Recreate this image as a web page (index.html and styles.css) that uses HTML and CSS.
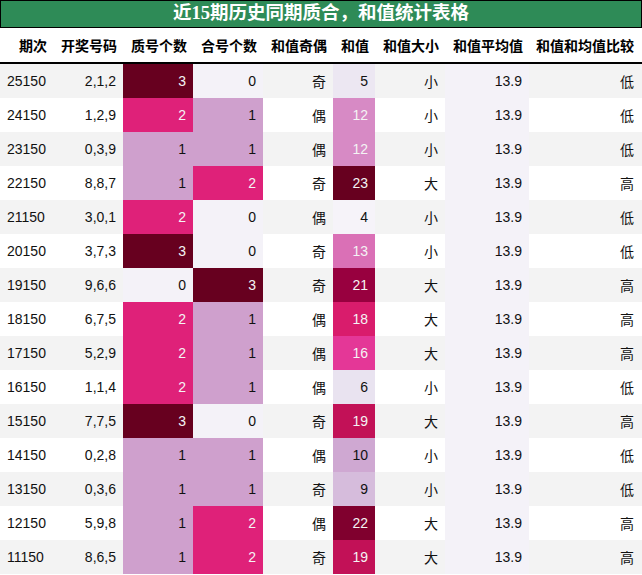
FILE: index.html
```html
<!DOCTYPE html>
<html lang="zh">
<head>
<meta charset="utf-8">
<title>近15期历史同期质合，和值统计表格</title>
<link rel="stylesheet" href="styles.css">
</head>
<body>
<div class="wrap">
  <div class="title">近15期历史同期质合，和值统计表格</div>
  <table class="grid">
    <colgroup>
      <col class="w1"><col class="w2"><col class="w3"><col class="w4"><col class="w5"><col class="w6"><col class="w7"><col class="w8"><col class="w9">
    </colgroup>
    <thead>
      <tr>
        <th>期次</th><th>开奖号码</th><th>质号个数</th><th>合号个数</th><th>和值奇偶</th><th>和值</th><th>和值大小</th><th>和值平均值</th><th>和值和均值比较</th>
      </tr>
    </thead>
    <tbody>
      <tr><td class="l">25150</td><td>2,1,2</td><td class="q3">3</td><td class="q0">0</td><td>奇</td><td class="lt" style="background:#ece7f2">5</td><td>小</td><td class="avg">13.9</td><td>低</td></tr>
      <tr><td class="l">24150</td><td>1,2,9</td><td class="q2">2</td><td class="q1">1</td><td>偶</td><td class="dk" style="background:#d78ac5">12</td><td>小</td><td class="avg">13.9</td><td>低</td></tr>
      <tr><td class="l">23150</td><td>0,3,9</td><td class="q1">1</td><td class="q1">1</td><td>偶</td><td class="dk" style="background:#d78ac5">12</td><td>小</td><td class="avg">13.9</td><td>低</td></tr>
      <tr><td class="l">22150</td><td>8,8,7</td><td class="q1">1</td><td class="q2">2</td><td>奇</td><td class="dk" style="background:#67001f">23</td><td>大</td><td class="avg">13.9</td><td>高</td></tr>
      <tr><td class="l">21150</td><td>3,0,1</td><td class="q2">2</td><td class="q0">0</td><td>偶</td><td class="lt" style="background:#f6f3f9">4</td><td>小</td><td class="avg">13.9</td><td>低</td></tr>
      <tr><td class="l">20150</td><td>3,7,3</td><td class="q3">3</td><td class="q0">0</td><td>奇</td><td class="dk" style="background:#da70b6">13</td><td>小</td><td class="avg">13.9</td><td>低</td></tr>
      <tr><td class="l">19150</td><td>9,6,6</td><td class="q0">0</td><td class="q3">3</td><td>奇</td><td class="dk" style="background:#98003f">21</td><td>大</td><td class="avg">13.9</td><td>高</td></tr>
      <tr><td class="l">18150</td><td>6,7,5</td><td class="q2">2</td><td class="q1">1</td><td>偶</td><td class="dk" style="background:#d91c6c">18</td><td>大</td><td class="avg">13.9</td><td>高</td></tr>
      <tr><td class="l">17150</td><td>5,2,9</td><td class="q2">2</td><td class="q1">1</td><td>偶</td><td class="dk" style="background:#e43797">16</td><td>大</td><td class="avg">13.9</td><td>高</td></tr>
      <tr><td class="l">16150</td><td>1,1,4</td><td class="q2">2</td><td class="q1">1</td><td>偶</td><td class="lt" style="background:#e9e3f0">6</td><td>小</td><td class="avg">13.9</td><td>低</td></tr>
      <tr><td class="l">15150</td><td>7,7,5</td><td class="q3">3</td><td class="q0">0</td><td>奇</td><td class="dk" style="background:#c21157">19</td><td>大</td><td class="avg">13.9</td><td>高</td></tr>
      <tr><td class="l">14150</td><td>0,2,8</td><td class="q1">1</td><td class="q1">1</td><td>偶</td><td class="lt" style="background:#cfa8d2">10</td><td>小</td><td class="avg">13.9</td><td>低</td></tr>
      <tr><td class="l">13150</td><td>0,3,6</td><td class="q1">1</td><td class="q1">1</td><td>奇</td><td class="lt" style="background:#d6bcdc">9</td><td>小</td><td class="avg">13.9</td><td>低</td></tr>
      <tr><td class="l">12150</td><td>5,9,8</td><td class="q1">1</td><td class="q2">2</td><td>偶</td><td class="dk" style="background:#80002e">22</td><td>大</td><td class="avg">13.9</td><td>高</td></tr>
      <tr><td class="l">11150</td><td>8,6,5</td><td class="q1">1</td><td class="q2">2</td><td>奇</td><td class="dk" style="background:#c21157">19</td><td>大</td><td class="avg">13.9</td><td>高</td></tr>
    </tbody>
  </table>
</div>
</body>
</html>
```
FILE: styles.css
```css
html, body {
  margin: 0;
  padding: 0;
  background: #ffffff;
}

.wrap {
  width: 642px;
  font-family: "Liberation Sans", "Noto Sans CJK SC", sans-serif;
  color: #111;
}

.title {
  box-sizing: border-box;
  height: 28px;
  border: 1px solid #000;
  background: #2e8b57;
  color: #ffffff;
  font-family: "Liberation Serif", "Noto Sans CJK SC", serif;
  font-weight: bold;
  font-size: 18.5px;
  line-height: 25px;
  text-align: center;
}

.grid {
  width: 642px;
  border-collapse: collapse;
  table-layout: fixed;
  font-size: 14px;
}

.w1 { width: 53px; }
.w2 { width: 70px; }
.w3 { width: 70px; }
.w4 { width: 70px; }
.w5 { width: 70px; }
.w6 { width: 42px; }
.w7 { width: 70px; }
.w8 { width: 84px; }
.w9 { width: 113px; }

.grid th {
  height: 34px;
  padding: 0 6px 0 0;
  text-align: right;
  font-weight: bold;
  color: #000;
  border-bottom: 2px solid #000;
  white-space: nowrap;
}

.grid th:last-child {
  padding-right: 8px;
}

.grid td {
  height: 34px;
  padding: 0 7px 0 0;
  text-align: right;
  white-space: nowrap;
}

.grid td:last-child {
  padding-right: 8px;
}

.grid td.l {
  text-align: left;
  padding: 0 0 0 7px;
}

.grid tbody tr:nth-child(odd) td {
  background: #f3f3f3;
}

.grid tbody tr:nth-child(even) td {
  background: #ffffff;
}

.grid tbody tr td.avg {
  background: #f4f2f8;
}

.grid tbody tr td.q0 {
  background: #f4f2f8;
  color: #111;
}

.grid tbody tr td.q1 {
  background: #cfa0cd;
  color: #111;
}

.grid tbody tr td.q2 {
  background: #df2179;
  color: #f4f4f4;
}

.grid tbody tr td.q3 {
  background: #67001f;
  color: #f4f4f4;
}

.grid td.dk {
  color: #f4f4f4;
}

.grid td.lt {
  color: #111;
}
```
